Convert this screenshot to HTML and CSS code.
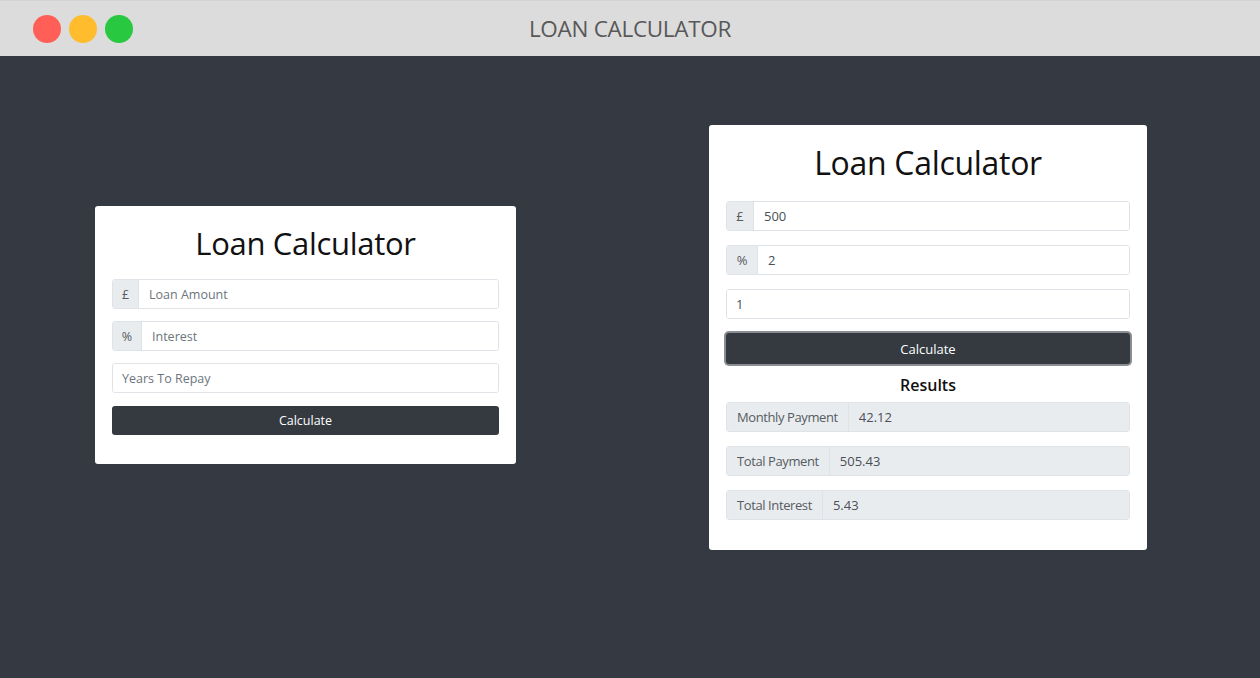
FILE: index.html
```html
<!DOCTYPE html>
<html>
<head>
<meta charset="utf-8">
<link rel="stylesheet" href="styles.css">
</head>
<body>
<div class="titlebar">
  <div class="dots">
    <span class="dot red"></span>
    <span class="dot yellow"></span>
    <span class="dot green"></span>
  </div>
  <div class="title">LOAN CALCULATOR</div>
</div>
<div class="stage">
  <div class="card card-left">
    <h1 class="heading">Loan Calculator</h1>
    <div class="group">
      <span class="addon">£</span>
      <input class="field" type="text" placeholder="Loan Amount">
    </div>
    <div class="group">
      <span class="addon addon-pct">%</span>
      <input class="field" type="text" placeholder="Interest">
    </div>
    <div class="group">
      <input class="field field-solo" type="text" placeholder="Years To Repay">
    </div>
    <button class="btn">Calculate</button>
  </div>

  <div class="card card-right">
    <h1 class="heading heading-lg">Loan Calculator</h1>
    <div class="group group-lg">
      <span class="addon">£</span>
      <input class="field" type="text" value="500">
    </div>
    <div class="group group-lg">
      <span class="addon addon-pct">%</span>
      <input class="field" type="text" value="2">
    </div>
    <div class="group group-lg">
      <input class="field field-solo" type="text" value="1">
    </div>
    <button class="btn btn-lg btn-focus">Calculate</button>
    <h2 class="results-title">Results</h2>
    <div class="group group-lg readonly">
      <span class="addon addon-label">Monthly Payment</span>
      <input class="field" type="text" value="42.12" readonly>
    </div>
    <div class="group group-lg readonly">
      <span class="addon addon-label">Total Payment</span>
      <input class="field" type="text" value="505.43" readonly>
    </div>
    <div class="group group-lg readonly last">
      <span class="addon addon-label">Total Interest</span>
      <input class="field" type="text" value="5.43" readonly>
    </div>
  </div>
</div>
</body>
</html>
```
FILE: styles.css
```css
* { box-sizing: border-box; }
html, body {
  margin: 0;
  padding: 0;
  height: 100%;
}
body {
  background: #353a42;
  font-family: "Open Sans", "Noto Sans", sans-serif;
  overflow: hidden;
}
.titlebar {
  height: 56px;
  background: #dcdcdc;
  border-top: 1px solid #d4d4d4;
  display: flex;
  align-items: center;
  position: relative;
}
.dots {
  display: flex;
  gap: 8px;
  padding-left: 33px;
}
.dot {
  width: 28px;
  height: 28px;
  border-radius: 50%;
  display: block;
}
.red { background: #ff5f57; }
.yellow { background: #ffbd2e; }
.green { background: #28c840; }
.title {
  position: absolute;
  left: 0;
  right: 0;
  text-align: center;
  font-size: 22.5px;
  color: #585858;
  letter-spacing: -0.3px;
  padding-left: 0;
}
.stage {
  display: flex;
  align-items: flex-start;
  padding-left: 95px;
}
.card {
  background: #fff;
  border-radius: 3px;
  padding: 17px 17px 29px;
}
.card-left {
  width: 421px;
  margin-top: 150px;
}
.card-right {
  width: 438px;
  margin-top: 69px;
  margin-left: 193px;
  padding-bottom: 30px;
}
.heading {
  margin: 0 0 16px;
  text-align: center;
  font-weight: 500;
  font-size: 31px;
  line-height: 40px;
  color: #111;
  letter-spacing: -0.3px;
}
.heading-lg {
  font-size: 32px;
  line-height: 42px;
  margin-bottom: 17px;
}
.group {
  display: flex;
  height: 30px;
  margin-bottom: 12px;
  border: 1px solid #dfe2e6;
  border-radius: 3px;
  overflow: hidden;
  font-size: 12.5px;
}
.group-lg {
  margin-bottom: 14px;
  font-size: 13px;
}
.addon {
  display: flex;
  align-items: center;
  justify-content: center;
  width: 26px;
  background: #e9ecef;
  color: #555b61;
  border-right: 1px solid #dfe2e6;
  flex: none;
}
.addon-pct { width: 29px; }
.group-lg .addon { width: 27px; }
.group-lg .addon-pct { width: 31px; }
.group-lg .addon.addon-label {
  width: auto;
  padding: 0 10px;
  justify-content: flex-start;
  letter-spacing: -0.4px;
}
.field {
  flex: 1;
  min-width: 0;
  border: none;
  outline: none;
  background: #fff;
  padding: 0 10px;
  font-family: inherit;
  font-size: inherit;
  color: #495057;
}
.field-solo { padding-left: 9px; }
.field::placeholder { color: #6c757d; }
.readonly .field { background: #e9ecef; }
.readonly.last { margin-bottom: 0; }
.btn {
  display: block;
  width: 100%;
  height: 29px;
  margin-top: 13px;
  border: none;
  border-radius: 3px;
  background: #343a40;
  color: #fff;
  font-family: inherit;
  font-size: 12.5px;
}
.btn-lg {
  height: 31px;
  margin-top: 12px;
  font-size: 13px;
}
.btn-focus {
  box-shadow: 0 0 0 2px #8a8d91;
}
.results-title {
  margin: 10px 0 6px;
  text-align: center;
  font-size: 16px;
  line-height: 22px;
  font-weight: 600;
  color: #111;
}
```
